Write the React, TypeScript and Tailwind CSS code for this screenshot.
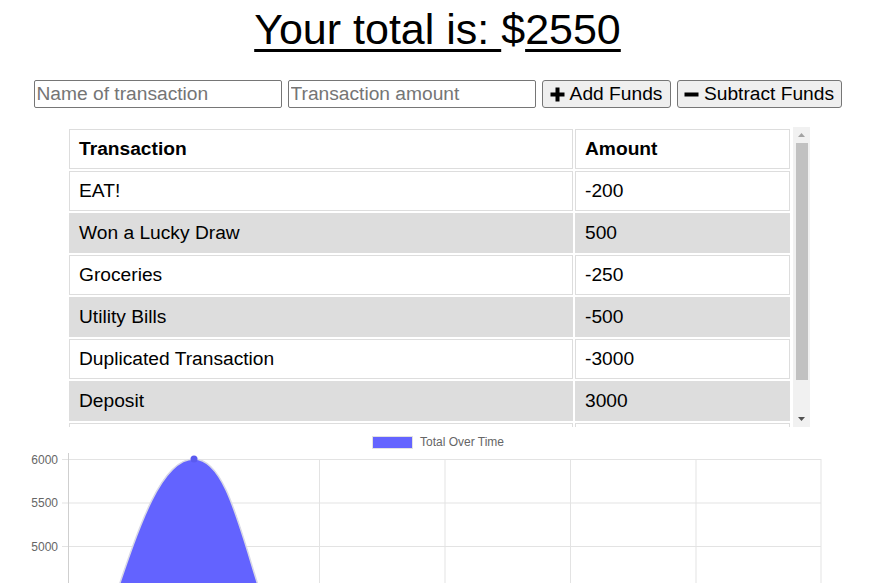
import React from "react";

const rows: [string, string][] = [
  ["EAT!", "-200"],
  ["Won a Lucky Draw", "500"],
  ["Groceries", "-250"],
  ["Utility Bills", "-500"],
  ["Duplicated Transaction", "-3000"],
  ["Deposit", "3000"],
  ["Salary", "3000"],
];

function Chart() {
  const vx = [68.5, 194, 319.5, 445, 570.5, 696, 821];
  const hy = [32, 75.5, 119];
  const labels = ["6000", "5500", "5000"];
  return (
    <svg width="875" height="156" viewBox="0 0 875 156" className="block">
      <rect x="372.5" y="9.5" width="40" height="12" fill="#6464ff" stroke="#e2e2e2" strokeWidth="1" />
      <text x="420" y="19" fontSize="12" fill="#666" fontFamily="Liberation Sans, Arial, sans-serif">
        Total Over Time
      </text>
      {hy.map((y, i) => (
        <g key={i}>
          <line x1="62" x2="821" y1={y + 0.5} y2={y + 0.5} stroke="#e3e3e3" strokeWidth="1" />
          <text
            x="58"
            y={y + 4.5}
            fontSize="12"
            fill="#666"
            textAnchor="end"
            fontFamily="Liberation Sans, Arial, sans-serif"
          >
            {labels[i]}
          </text>
        </g>
      ))}
      {vx.map((x, i) => (
        <line
          key={i}
          x1={x}
          x2={x}
          y1={i === 0 ? 26 : 32}
          y2="156"
          stroke={i === 0 ? "#cfcfcf" : "#e3e3e3"}
          strokeWidth="1"
        />
      ))}
      <path
        d="M68.5 293 C118.7 188.6 143.8 32 194 32 C244.2 32 250.7 209.5 319.5 293 L319.5 400 L68.5 400 Z"
        fill="#6363ff"
        stroke="#d9d9e6"
        strokeWidth="1.5"
      />
      <circle cx="194" cy="32" r="3.5" fill="#5a5af0" />
    </svg>
  );
}

export default function App() {
  return (
    <div
      className="w-[875px] h-[583px] overflow-hidden bg-white text-black"
      style={{ fontFamily: '"Liberation Sans", Arial, sans-serif' }}
    >
      <h1 className="mt-[5px] text-center text-[43px] leading-[49px] font-normal">
        <span className="underline decoration-[3px] underline-offset-[5px]">Your total is: </span>$
        <span className="underline decoration-[3px] underline-offset-[5px]">2550</span>
      </h1>

      <div className="mt-[26px] flex justify-center items-center gap-[6px] text-[19.2px]">
        <input
          className="w-[248px] h-[28px] border border-[#767676] rounded-[2px] px-[2px] py-[1px] leading-[22px] placeholder:text-[#757575] outline-none"
          placeholder="Name of transaction"
        />
        <input
          className="w-[248px] h-[28px] border border-[#767676] rounded-[2px] px-[2px] py-[1px] leading-[22px] placeholder:text-[#757575] outline-none"
          placeholder="Transaction amount"
        />
        <button className="w-[129px] h-[28px] flex items-center justify-center gap-[5px] bg-[#efefef] border border-[#767676] rounded-[3px] leading-[22px]">
          <svg width="15" height="15" viewBox="0 0 15 15">
            <path d="M5.5 0.5h4v5h5v4h-5v5h-4v-5h-5v-4h5z" fill="#000" />
          </svg>
          <span>Add Funds</span>
        </button>
        <button className="w-[165px] h-[28px] flex items-center justify-center gap-[5px] bg-[#efefef] border border-[#767676] rounded-[3px] leading-[22px]">
          <svg width="15" height="15" viewBox="0 0 15 15">
            <rect x="0.5" y="5.5" width="14" height="4" fill="#000" />
          </svg>
          <span>Subtract Funds</span>
        </button>
      </div>

      <div className="mt-[19px] ml-[67px] w-[743px] h-[300px] flex">
        <div className="w-[726px] h-full overflow-hidden">
          <table className="w-[725px] border-separate border-spacing-[2px] text-[19.2px] leading-[22px]">
            <thead>
              <tr>
                <th className="w-[504px] text-left font-bold border border-[#dddddd] px-[9px] py-[8px]">Transaction</th>
                <th className="text-left font-bold border border-[#dddddd] px-[9px] py-[8px]">Amount</th>
              </tr>
            </thead>
            <tbody>
              {rows.map(([n, a], i) => (
                <tr key={i} className={i % 2 === 1 ? "bg-[#dddddd]" : "bg-white"}>
                  <td className="border border-[#dddddd] px-[9px] py-[8px]">{n}</td>
                  <td className="border border-[#dddddd] px-[9px] py-[8px]">{a}</td>
                </tr>
              ))}
            </tbody>
          </table>
        </div>
        <div className="w-[17px] h-full bg-[#f1f1f1] flex flex-col items-center">
          <div className="h-[16px] w-full flex items-center justify-center">
            <svg width="7" height="4" viewBox="0 0 7 4">
              <path d="M3.5 0 L7 4 L0 4 Z" fill="#a3a3a3" />
            </svg>
          </div>
          <div className="w-[12px] h-[237px] bg-[#c1c1c1]" />
          <div className="flex-1" />
          <div className="h-[17px] w-full flex items-center justify-center">
            <svg width="7" height="4" viewBox="0 0 7 4">
              <path d="M0 0 L7 0 L3.5 4 Z" fill="#505050" />
            </svg>
          </div>
        </div>
      </div>

      <Chart />
    </div>
  );
}
